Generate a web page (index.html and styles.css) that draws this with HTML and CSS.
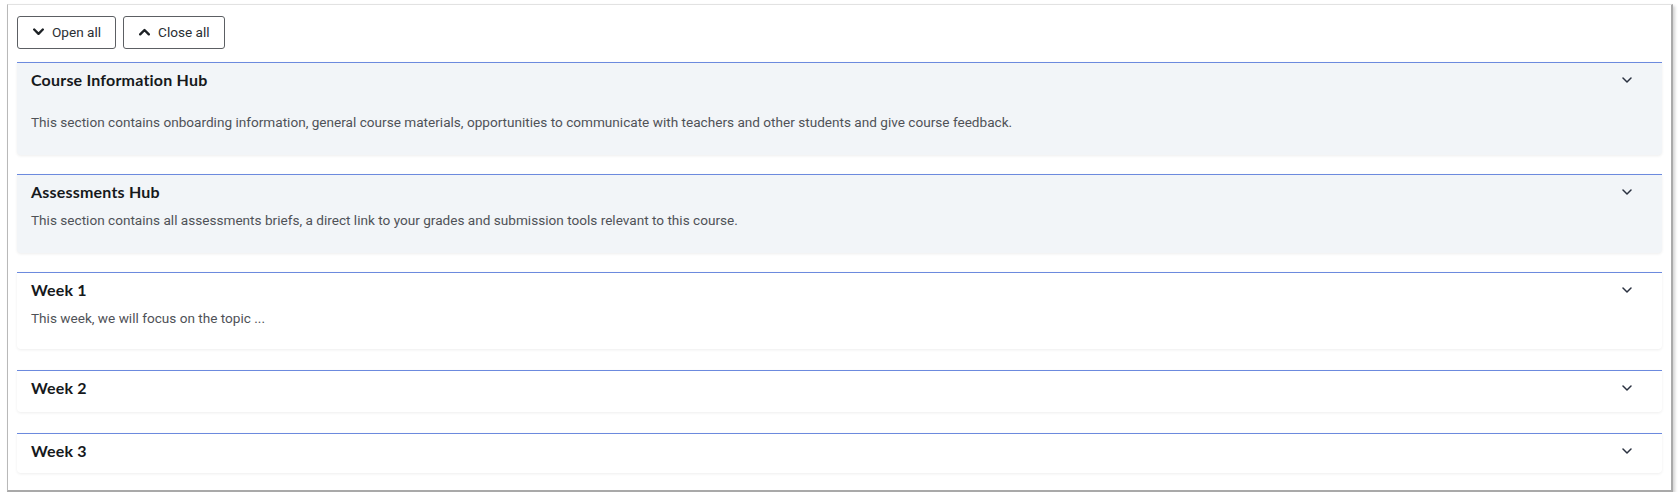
FILE: index.html
```html
<!DOCTYPE html>
<html lang="en">
<head>
<meta charset="utf-8">
<title>Course sections</title>
<link rel="stylesheet" href="styles.css">
</head>
<body>
<div class="frame">
  <div class="toolbar">
    <button class="btn" type="button">
      <svg class="btn-icon" width="11" height="8" viewBox="0 0 11 8"><path d="M1.2 1.5 L5.5 5.8 L9.8 1.5" fill="none" stroke="#1d2125" stroke-width="2.4" stroke-linecap="round" stroke-linejoin="round"/></svg>
      <span>Open all</span>
    </button>
    <button class="btn" type="button">
      <svg class="btn-icon" width="11" height="8" viewBox="0 0 11 8"><path d="M1.2 6.3 L5.5 2 L9.8 6.3" fill="none" stroke="#1d2125" stroke-width="2.4" stroke-linecap="round" stroke-linejoin="round"/></svg>
      <span>Close all</span>
    </button>
  </div>

  <div class="section hub">
    <div class="section-head">
      <h3 class="section-title">Course Information Hub</h3>
      <svg class="chev" width="10" height="6" viewBox="0 0 10 6"><path d="M1 1 L5 5 L9 1" fill="none" stroke="#2a3140" stroke-width="1.5" stroke-linecap="round" stroke-linejoin="round"/></svg>
    </div>
    <p class="section-desc spaced">This section contains onboarding information, general course materials, opportunities to communicate with teachers and other students and give course feedback.</p>
  </div>

  <div class="section hub">
    <div class="section-head">
      <h3 class="section-title">Assessments Hub</h3>
      <svg class="chev" width="10" height="6" viewBox="0 0 10 6"><path d="M1 1 L5 5 L9 1" fill="none" stroke="#2a3140" stroke-width="1.5" stroke-linecap="round" stroke-linejoin="round"/></svg>
    </div>
    <p class="section-desc">This section contains all assessments briefs, a direct link to your grades and submission tools relevant to this course.</p>
  </div>

  <div class="section week week-first">
    <div class="section-head">
      <h3 class="section-title">Week 1</h3>
      <svg class="chev" width="10" height="6" viewBox="0 0 10 6"><path d="M1 1 L5 5 L9 1" fill="none" stroke="#2a3140" stroke-width="1.5" stroke-linecap="round" stroke-linejoin="round"/></svg>
    </div>
    <p class="section-desc">This week, we will focus on the topic ...</p>
  </div>

  <div class="section week wide-gap">
    <div class="section-head">
      <h3 class="section-title">Week 2</h3>
      <svg class="chev" width="10" height="6" viewBox="0 0 10 6"><path d="M1 1 L5 5 L9 1" fill="none" stroke="#2a3140" stroke-width="1.5" stroke-linecap="round" stroke-linejoin="round"/></svg>
    </div>
  </div>

  <div class="section week short">
    <div class="section-head">
      <h3 class="section-title">Week 3</h3>
      <svg class="chev" width="10" height="6" viewBox="0 0 10 6"><path d="M1 1 L5 5 L9 1" fill="none" stroke="#2a3140" stroke-width="1.5" stroke-linecap="round" stroke-linejoin="round"/></svg>
    </div>
  </div>
</div>
</body>
</html>
```

FILE: styles.css
```css
html, body {
  margin: 0;
  padding: 0;
  background: #ffffff;
}

body {
  font-family: Roboto, "Liberation Sans", Arial, sans-serif;
  color: #1d2125;
}

.frame {
  box-sizing: border-box;
  width: 1666px;
  margin: 4px 0 0 7px;
  padding: 11px 9px 17px 9px;
  border: 1px solid #e2e2e2;
  border-left-color: #b9b9b9;
  border-right: 2px solid #a9a9a9;
  border-bottom: 2px solid #a9a9a9;
  box-shadow: 2px 2px 3px rgba(0, 0, 0, 0.18);
  background: #ffffff;
}

.toolbar {
  display: flex;
  gap: 7px;
  margin-bottom: 13px;
}

.btn {
  display: flex;
  align-items: center;
  gap: 8px;
  box-sizing: border-box;
  height: 33px;
  padding: 0 14px 1px 15px;
  border: 1px solid #5c5f63;
  border-radius: 3px;
  background: #ffffff;
  font-family: Roboto, "Liberation Sans", Arial, sans-serif;
  font-size: 13.6px;
  color: #2a2e33;
  cursor: pointer;
}

.btn-icon {
  display: block;
  flex: none;
}

.section {
  border-top: 1px solid #6c8ade;
  border-radius: 0 0 4px 4px;
  padding: 7px 14px 14px 14px;
  margin-bottom: 19px;
  box-shadow: 0 1px 3px rgba(0, 0, 0, 0.07);
}

.section.hub {
  background: #f2f5f8;
  padding-bottom: 16px;
}

.section.week {
  background: #ffffff;
}

.section.week-first {
  margin-bottom: 21px;
}

.section.wide-gap {
  margin-bottom: 21px;
}

.section.short {
  padding-bottom: 12px;
  margin-bottom: 0;
}

.section-head {
  display: flex;
  align-items: center;
  justify-content: space-between;
  height: 20px;
}

.section-title {
  margin: 0;
  font-family: Lato, "Open Sans", sans-serif;
  font-weight: 700;
  font-size: 16px;
  line-height: 20px;
  letter-spacing: 0.2px;
  color: #16191c;
}

.chev {
  display: block;
  margin-right: 16px;
}

.section-desc {
  margin: 8px 0 7px 0;
  font-family: Roboto, "Liberation Sans", Arial, sans-serif;
  font-size: 13.6px;
  line-height: 20px;
  color: #4f5257;
}

.section-desc.spaced {
  margin-top: 22px;
}
```
